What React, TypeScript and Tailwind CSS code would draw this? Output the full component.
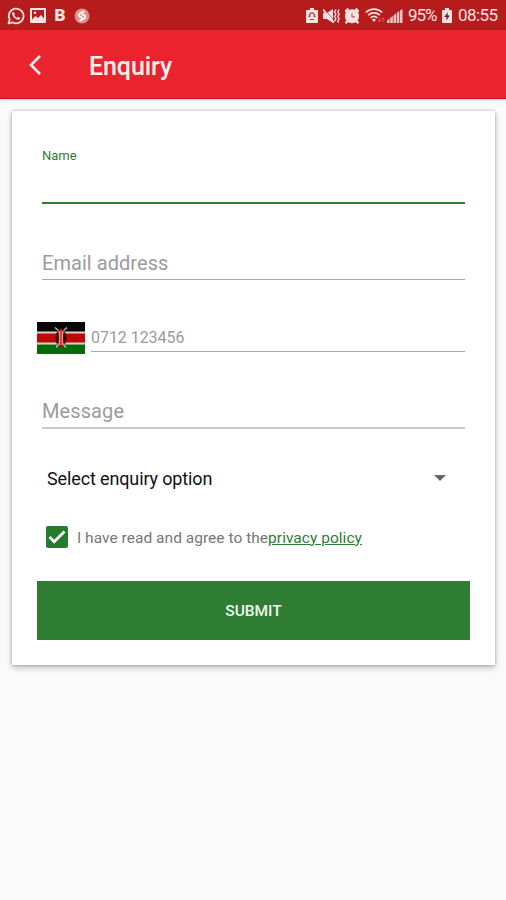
import type { ReactNode } from "react";

function StatusIcon({ className, box = "0 0 24 24", children }: { className: string; box?: string; children: ReactNode }) {
  return (
    <svg viewBox={box} className={`shrink-0 ${className}`} fill="currentColor" aria-hidden="true">
      {children}
    </svg>
  );
}

function StatusBar() {
  return (
    <div className="flex h-[30px] items-center bg-[#b71c1c] pr-[8px] pl-[7px] pt-[1px] text-[#fbe3e1]">
      <StatusIcon className="h-[18px] w-[18px]">
        <path
          d="M2 22l1.6-5.4A9.8 9.8 0 1 1 7.4 20.500z"
          fill="none"
          stroke="currentColor"
          strokeWidth="2.400"
          strokeLinejoin="round"
        />
        <path d="M8.600 6.500c-1.500.4-2 1.800-1.600 3.300 1 3.600 3.800 6.300 7.200 7.200 1.700.4 3.200-.5 3.400-2.300l-2.900-1.600-1.500 1.400c-1.700-.8-3-2.100-3.700-3.700l1.200-1.500z" />
      </StatusIcon>
      <StatusIcon className="ml-[5px] h-[15px] w-[16px]" box="0 0 16 15">
        <path fillRule="evenodd" d="M1 0h14a1 1 0 0 1 1 1v13a1 1 0 0 1-1 1H1a1 1 0 0 1-1-1V1a1 1 0 0 1 1-1zM2 2v9.500l3.500-3.500 2.500 2L11 7l3 3.500V2z" />
        <circle cx="5" cy="4.800" r="1.300" />
      </StatusIcon>
      <span className="ml-[8px] w-[12px] text-center font-[Roboto] text-[17px] leading-none font-black">B</span>
      <StatusIcon className="ml-[8px] h-[16px] w-[16px]" box="0 0 16 16">
        <circle cx="8" cy="8" r="7.500" fill="#e58c87" />
        <path
          d="M9.800 3.500L5.500 5.700a1.700 1.700 0 0 0 0 2.800l2 1M6.200 12.500l4.300-2.200a1.700 1.700 0 0 0 0-2.800l-2-1"
          fill="none"
          stroke="#fff4f2"
          strokeWidth="2"
          strokeLinecap="round"
        />
      </StatusIcon>

      <div className="ml-auto flex items-center">
        <StatusIcon className="h-[15px] w-[12px]" box="0 0 12 15">
          <path d="M4 0h4v2h3a1 1 0 0 1 1 1v11a1 1 0 0 1-1 1H1a1 1 0 0 1-1-1V3a1 1 0 0 1 1-1h3z" />
          <path d="M3.800 8.500V7a2.200 2.200 0 0 1 4.400 0v1.500M2.300 8.300h2.200M7.500 8.300h2.200M4 11.500h4" fill="none" stroke="#c43b37" strokeWidth="1.200" />
        </StatusIcon>
        <StatusIcon className="ml-[5px] h-[16px] w-[17px]" box="0 0 17 16">
          <path d="M0 5h4l6-4v14l-6-4H0z" />
          <path d="M0 1.500l11 13" stroke="currentColor" strokeWidth="1.800" />
          <path d="M1.800 1.500l9.700 11.400" stroke="#c43b37" strokeWidth=".7" />
          <path d="M13 1.500l-1.500 2.300 1.500 2.400-1.500 2.300 1.500 2.300-1.500 2.400M16.200 1.500l-1.500 2.300 1.500 2.400-1.500 2.300 1.500 2.300-1.500 2.400 1 1.400" fill="none" stroke="currentColor" strokeWidth="1.300" />
        </StatusIcon>
        <StatusIcon className="ml-[5px] h-[16px] w-[14px]" box="0 0 14 16">
          <circle cx="7" cy="8.300" r="7" />
          <path d="M0 3.800l3.500-3M14 3.800l-3.500-3M2.500 13l-2 2.300M11.500 13l2 2.300" stroke="currentColor" strokeWidth="2.500" />
          <path d="M7 5.500v3.300h2.800" fill="none" stroke="#cf5a55" strokeWidth="1.200" />
        </StatusIcon>
        <StatusIcon className="ml-[6px] h-[15px] w-[20px]" box="0 0 20 15">
          <path
            d="M.8 4.500c4.600-4.400 11.800-4.400 16.400 0M3.200 7.200c3.300-3 8.300-3 11.600 0M5.700 9.800c1.900-1.700 4.700-1.700 6.600 0"
            fill="none"
            stroke="currentColor"
            strokeWidth="1.700"
          />
          <path d="M7 11.500c1.200-1 2.800-1 4 0L9 14z" />
          <path d="M14.500 9.500v4.500M13 12.200l1.500 1.800 1.500-1.800M18 14V9.500M16.700 11.300L18 9.500l1.300 1.800" fill="none" stroke="#d9574f" strokeWidth="1" />
        </StatusIcon>
        <StatusIcon className="ml-[2px] h-[14px] w-[16px]" box="0 0 16 14">
          <path d="M0 14v-2.500L2.500 9.500V14zM3.200 14V9L5.800 6.900V14zM6.500 14V6.400l2.600-2.100V14zM9.800 14V3.900l2.500-2V14zM13 14V1.600L15.500 0v14z" opacity=".85" />
        </StatusIcon>
        <span className="ml-[5px] w-[29px] font-[Roboto] text-[17px] leading-none tracking-[-1px]">95%</span>
        <StatusIcon className="ml-[5px] h-[15px] w-[10px]" box="0 0 10 15">
          <path d="M3 0h4v2h2a1 1 0 0 1 1 1v11a1 1 0 0 1-1 1H1a1 1 0 0 1-1-1V3a1 1 0 0 1 1-1h2z" />
          <path d="M5.800 4L2.200 9h2.300v3.500L7.800 7.500H5.500z" fill="#63211d" />
        </StatusIcon>
        <span className="ml-[6px] w-[40px] font-[Roboto] text-[17px] leading-none tracking-[-0.6px]">08:55</span>
      </div>
    </div>
  );
}

function KenyaFlag() {
  return (
    <svg viewBox="0 0 48 32" className="h-[32px] w-[48px] shrink-0" role="img" aria-label="+254">
      <path fill="#060606" d="M0 0h48v10H0z" />
      <path fill="#dccfc8" d="M0 9.500h48v13H0z" />
      <path fill="#c00808" d="M0 11.500h48v9H0z" />
      <path fill="#006b08" d="M0 22.500h48V32H0z" />
      <path d="M18 5.500l3.500 3M30 5.500l-3.500 3M19 25.500l2.500-3M29 25.500l-2.500-3" stroke="#c9c3be" strokeWidth="1.200" />
      <path d="M24 6c2.500 2.500 3.500 6 3.500 10s-1 7.500-3.500 10c-2.500-2.500-3.500-6-3.500-10s1-7.500 3.500-10z" fill="#c20c0c" />
      <path d="M20.200 9c2 4.500 2 9.500 0 14-2.200-4.500-2.200-9.500 0-14M27.800 9c-2 4.500-2 9.500 0 14 2.200-4.500 2.200-9.500 0-14" fill="#2a0a0a" />
      <path d="M22.800 9v14M25.200 9v14" stroke="#efc9c2" strokeWidth="1" />
    </svg>
  );
}

function Field({ label, className }: { label: string; className: string }) {
  return (
    <div className={`mx-[5px] flex items-end text-[#9b9b9b] ${className}`}>
      <span>{label}</span>
    </div>
  );
}

export default function App() {
  return (
    <main className="flex h-[900px] w-[506px] flex-col overflow-hidden bg-[#fafafa] font-[Roboto,sans-serif]">
      <StatusBar />
      <header className="z-10 flex h-[69px] shrink-0 items-center border-b border-[#c9151d] bg-[#eb232e] pt-[3px] text-[#fff1ef] shadow-[0_1px_3px_rgba(0,0,0,0.2)]">
        <svg viewBox="0 0 14 20" className="mb-[2px] ml-[28px] h-[20px] w-[14px]" fill="none" stroke="currentColor" strokeWidth="2.600">
          <path d="M12 1L3 10l9 9" />
        </svg>
        <h1 className="ml-[47px] pt-px text-[25px] leading-none font-medium tracking-[-0.1px]">Enquiry</h1>
      </header>

      <section className="mr-[11px] ml-[12px] mt-[12px] flex h-[554px] shrink-0 flex-col bg-white px-[25px] shadow-[0_3px_6px_rgba(0,0,0,0.22),0_0_3px_rgba(0,0,0,0.28)]">
        <div className="mx-[5px] h-[93px] shrink-0 border-b-2 border-[#2e7d32] pt-[37px] text-[13px] leading-[16px] text-[#2e7d32]">
          Name
        </div>
        <Field label="Email address" className="h-[76px] border-b border-[#a8a8a8] pb-[4px] text-[20px] leading-[24px] tracking-[0.05px]" />
        <div className="flex h-[74px] shrink-0 items-end">
          <KenyaFlag />
          <div className="mr-[5px] mb-[2px] ml-[6px] flex-1 border-b border-[#a8a8a8] pb-[3px] text-[16px] leading-[20px] tracking-[-0.05px] text-[#9b9b9b]">
            0712 123456
          </div>
        </div>
        <Field label="Message" className="h-[75px] border-b-2 border-[#cbcbcb] pb-[4px] text-[20px] leading-[24px] tracking-[0.1px]" />
        <div className="mt-[31px] flex h-[36px] shrink-0 items-center justify-between pr-[24px] pl-[10px] text-[18px] tracking-[-0.13px] text-[#111]">
          <span>Select enquiry option</span>
          <svg viewBox="0 0 12 6" className="h-[6px] w-[12px]" fill="#666">
            <path d="M0 0h12L6 6z" />
          </svg>
        </div>
        <div className="mt-[30px] flex h-[22px] shrink-0 items-center pl-[9px]">
          <svg viewBox="0 0 22 22" className="h-[22px] w-[22px]">
            <rect width="22" height="22" rx="2" fill="#257a2b" />
            <path d="M3.500 11l4.700 4.700L18.500 5.500" fill="none" stroke="#fff" strokeWidth="2.800" />
          </svg>
          <p className="ml-[9px] pt-[3px] text-[15.500px] leading-none tracking-[0.03px] whitespace-nowrap text-[#777]">
            I have read and agree to the
            <a href="#privacy" className="text-[#2e7d32] underline">
              privacy policy
            </a>
          </p>
        </div>
        <button type="button" className="mt-[33px] h-[59px] shrink-0 bg-[#2e7d32] pt-[3px] text-[15.500px] font-medium text-[#eef7ee]">
          SUBMIT
        </button>
      </section>
    </main>
  );
}
